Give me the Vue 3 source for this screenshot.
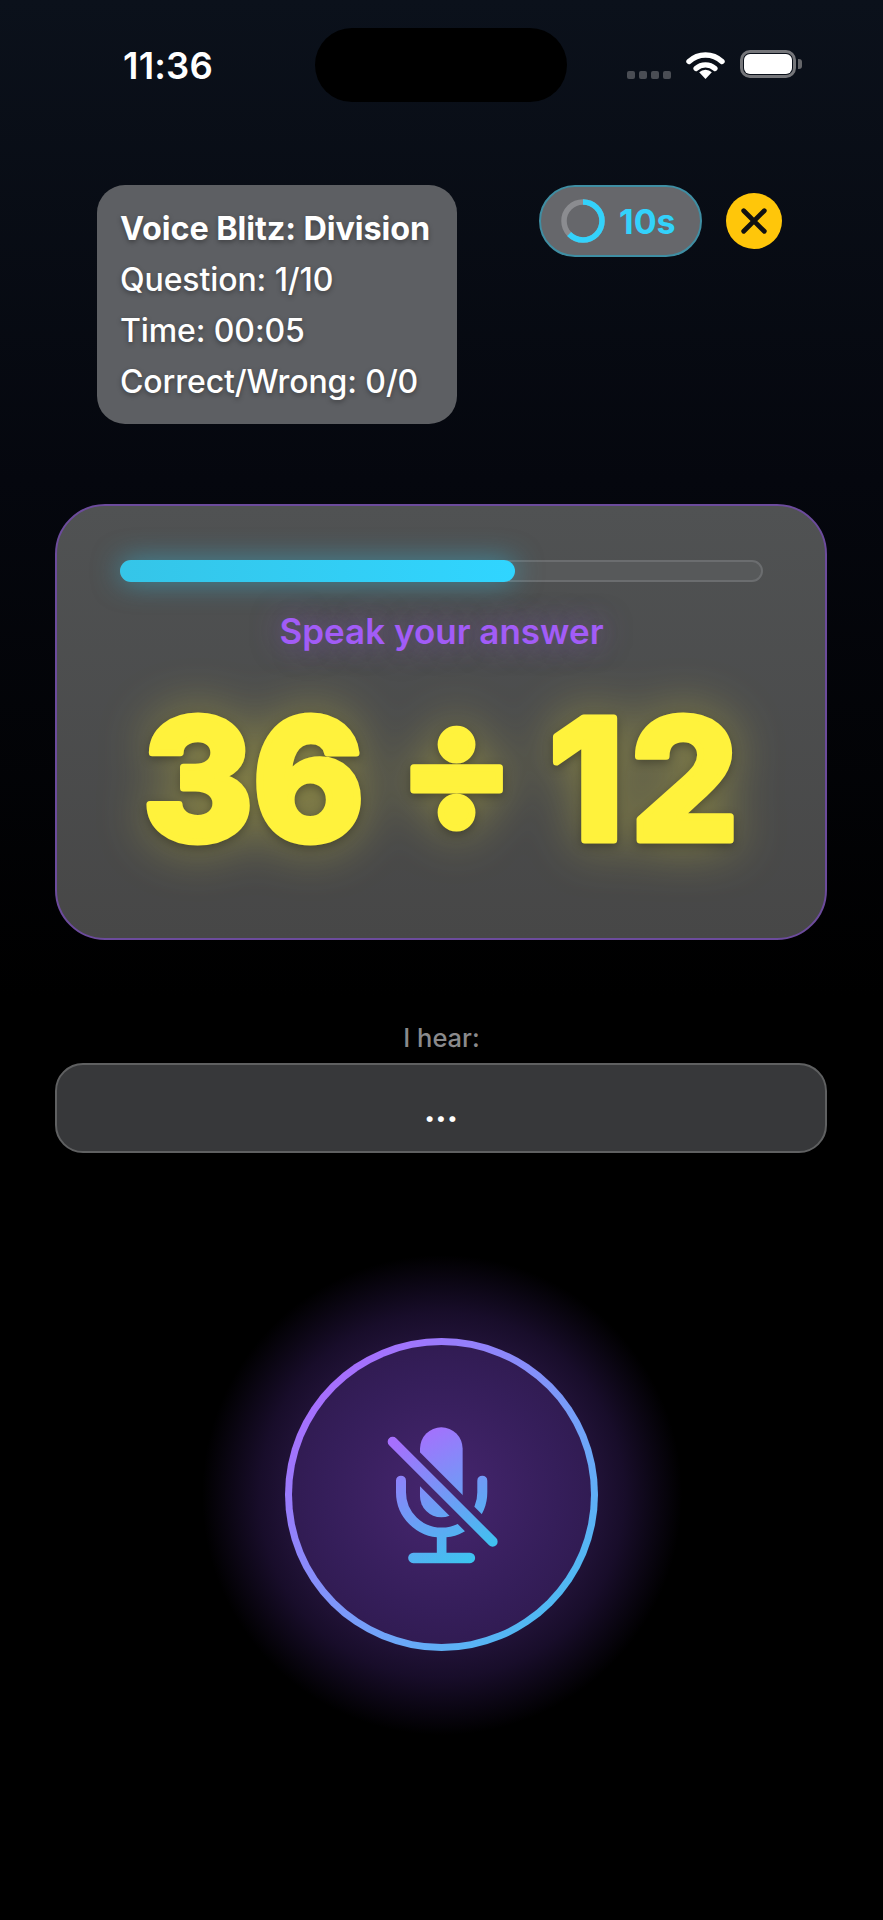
<template>
  <div class="page">
    <div class="status">
      <span class="clock">11:36</span>
      <div class="island"></div>
      <div class="status-icons">
        <div class="signal"><i></i><i></i><i></i><i></i></div>
        <svg class="wifi" viewBox="0 0 39 29" width="39" height="29">
          <path d="M3 11.5a24 24 0 0 1 33 0" fill="none" stroke="#fff" stroke-width="5.4" stroke-linecap="round"/>
          <path d="M10 18.5a14 14 0 0 1 19 0" fill="none" stroke="#fff" stroke-width="5.2" stroke-linecap="round"/>
          <path d="M19.5 29l-6.3-6.8a9 9 0 0 1 12.6 0z" fill="#fff"/>
        </svg>
        <div class="battery"><div class="battery-fill"></div></div>
      </div>
    </div>

    <div class="top-row">
      <div class="info">
        <div class="info-title">Voice Blitz: Division</div>
        <div>Question: 1/10</div>
        <div>Time: 00:05</div>
        <div>Correct/Wrong: 0/0</div>
      </div>
      <div class="controls">
        <div class="timer">
          <svg viewBox="0 0 44 44" width="44" height="44">
            <circle cx="22" cy="22" r="19" fill="none" stroke="#8b8c90" stroke-width="5.5"/>
            <circle cx="22" cy="22" r="19" fill="none" stroke="#33d2fb" stroke-width="5.5" pathLength="100" stroke-dasharray="63 100" transform="rotate(-90 22 22)"/>
          </svg>
          <span>10s</span>
        </div>
        <div class="close">
          <svg viewBox="0 0 24 24" width="26" height="26"><path d="M2.5 2.5l19 19M21.5 2.5l-19 19" stroke="#111" stroke-width="4.4" stroke-linecap="round"/></svg>
        </div>
      </div>
    </div>

    <div class="card">
      <div class="bar"><div class="bar-fill"></div></div>
      <div class="prompt">Speak your answer</div>
      <svg class="equation" viewBox="0 0 642 200" width="642" height="200">
        <text x="323.5" y="154" text-anchor="middle">36 ÷ <tspan class="wide">12</tspan></text>
      </svg>
    </div>

    <div class="hear-label">I hear:</div>
    <div class="hear-box">...</div>

    <div class="mic-zone">
      <div class="halo"></div>
      <div class="mic">
        <svg viewBox="375 310 340 424" width="113.3" height="141.3">
          <defs>
            <linearGradient id="micGrad" gradientUnits="userSpaceOnUse" x1="440" y1="350" x2="640" y2="730">
              <stop offset="0" stop-color="#a66ffd"/>
              <stop offset="1" stop-color="#3ac6ef"/>
            </linearGradient>
            <mask id="cut" maskUnits="userSpaceOnUse" x="375" y="310" width="340" height="424">
              <rect x="375" y="310" width="340" height="424" fill="#fff"/>
              <path d="M340 306L757 723" stroke="#000" stroke-width="72"/>
            </mask>
          </defs>
          <g mask="url(#cut)">
            <rect x="480" y="320" width="128" height="270" rx="64" fill="url(#micGrad)"/>
            <path d="M423 480v35a122 121 0 0 0 244 0v-35" fill="none" stroke="url(#micGrad)" stroke-width="30" stroke-linecap="round"/>
          </g>
          <path d="M545 640v65" stroke="url(#micGrad)" stroke-width="29"/>
          <path d="M460 712h170" stroke="url(#micGrad)" stroke-width="31" stroke-linecap="round"/>
          <path d="M398 363L698 663" stroke="url(#micGrad)" stroke-width="30" stroke-linecap="round"/>
        </svg>
      </div>
    </div>
  </div>
</template>

<script setup>
</script>

<style>
html, body { margin: 0; background: #000; }
</style>

<style scoped>
.page {
  width: 883px;
  height: 1920px;
  overflow: hidden;
  display: flex;
  flex-direction: column;
  background: linear-gradient(180deg, #0b111b 0%, #05070e 25%, #000 52%);
  font-family: Inter, "Liberation Sans", sans-serif;
  color: #fff;
}
.status {
  display: grid;
  grid-template-columns: 315px 252px 1fr;
  align-items: start;
  padding-top: 28px;
  height: 185px;
  box-sizing: border-box;
}
.clock {
  justify-self: start;
  margin-left: 123px;
  margin-top: 16px;
  font-size: 36.5px;
  line-height: 44px;
  font-weight: 600;
  letter-spacing: 0.2px;
}
.island { height: 74px; border-radius: 37px; background: #000; }
.status-icons {
  display: flex;
  align-items: flex-start;
  padding-left: 60px;
  margin-top: 22px;
}
.signal { display: flex; gap: 4px; margin-top: 21px; margin-right: 15px; }
.signal i { width: 8px; height: 8px; border-radius: 2px; background: #4a4d54; }
.wifi { display: block; }
.battery {
  position: relative;
  margin-left: 15px;
  width: 56px;
  height: 28px;
  box-sizing: border-box;
  border: 3px solid #75767a;
  border-radius: 10px;
  padding: 1px;
}
.battery::after {
  content: "";
  position: absolute;
  right: -9px;
  top: 6px;
  width: 4px;
  height: 10px;
  border-radius: 0 3px 3px 0;
  background: #65666a;
}
.battery-fill { height: 100%; background: #fff; border-radius: 6px; }

.top-row { display: flex; align-items: flex-start; height: 319px; }
.info {
  margin-left: 97px;
  width: 360px;
  height: 239px;
  box-sizing: border-box;
  padding: 18px 23px;
  border-radius: 28px;
  background: #5d5f63;
  font-size: 32px;
  line-height: 51px;
  font-weight: 500;
  letter-spacing: -0.1px;
  text-shadow: 0 2px 5px rgba(0,0,0,.35);
  white-space: nowrap;
}
.info-title { font-weight: 700; font-size: 32.4px; }
.controls { display: flex; align-items: center; margin-left: 82px; }
.timer {
  width: 163px;
  height: 72px;
  box-sizing: border-box;
  border: 2px solid #3f8ea3;
  border-radius: 36px;
  background: #66676b;
  display: flex;
  align-items: center;
  gap: 14px;
  padding-left: 20px;
  color: #33d2fb;
  font-size: 34px;
  font-weight: 700;
}
.close {
  margin-left: 24px;
  width: 56px;
  height: 56px;
  border-radius: 50%;
  background: #ffc60a;
  display: flex;
  align-items: center;
  justify-content: center;
}

.card {
  margin: 0 56px 0 55px;
  height: 436px;
  box-sizing: border-box;
  border: 2px solid #6c4b9c;
  border-radius: 50px;
  background: linear-gradient(180deg, #505253 0%, #474747 100%);
  padding: 54px 62px 0 63px;
  display: flex;
  flex-direction: column;
  align-items: center;
}
.bar {
  width: 100%;
  height: 22px;
  box-sizing: border-box;
  border: 2px solid #6b6d6f;
  border-radius: 11px;
  background: #57595a;
  position: relative;
}
.bar-fill {
  position: absolute;
  left: -2px;
  top: -2px;
  height: 22px;
  width: 395px;
  border-radius: 11px;
  background: linear-gradient(90deg, #35c5e8, #30d5ff);
  box-shadow: 0 0 28px rgba(50, 210, 250, .5);
}
.prompt {
  margin-top: 27px;
  font-size: 35px;
  line-height: 44px;
  font-weight: 600;
  color: #a25cf7;
  text-shadow: 0 0 30px rgba(162, 92, 247, .5);
}
.equation {
  margin-top: 33px;
  display: block;
  flex: none;
  overflow: visible;
  filter: drop-shadow(0 3px 5px rgba(0,0,0,.3)) drop-shadow(0 0 26px rgba(255, 242, 60, .38));
}
.equation text {
  font-family: Inter, "Liberation Sans", sans-serif;
  font-size: 168px;
  font-weight: 800;
  fill: #fff23c;
  stroke: #fff23c;
  stroke-width: 7px;
  stroke-linejoin: round;
  word-spacing: -2px;
}
.equation .wide { letter-spacing: 8px; }

.hear-label {
  margin-top: 83px;
  text-align: center;
  font-size: 25.5px;
  line-height: 30px;
  font-weight: 500;
  color: #8a8a8c;
}
.hear-box {
  margin: 10px 56px 0 55px;
  height: 90px;
  box-sizing: border-box;
  border: 2px solid #5f6061;
  border-radius: 28px;
  background: #37383a;
  text-align: center;
  font-size: 32px;
  line-height: 92px;
  font-weight: 800;
}
.mic-zone {
  position: relative;
  margin-top: 185px;
  display: flex;
  justify-content: center;
}
.halo {
  position: absolute;
  left: 50%;
  top: 50%;
  width: 480px;
  height: 480px;
  transform: translate(-50%, -50%);
  border-radius: 50%;
  background: radial-gradient(circle closest-side, #201236 0%, #201236 65%, #180d2a 76%, #0d0717 87%, rgba(0,0,0,0) 100%);
}
.mic {
  position: relative;
  width: 313px;
  height: 313px;
  box-sizing: border-box;
  border: 7px solid transparent;
  border-radius: 50%;
  background:
    radial-gradient(circle, #46266f 0%, #351e5a 55%, #2a1746 100%) padding-box,
    linear-gradient(135deg, #a66ffd 15%, #6ea6f8 65%, #3ac6ef 100%) border-box;
  display: flex;
  align-items: center;
  justify-content: center;
}
</style>
